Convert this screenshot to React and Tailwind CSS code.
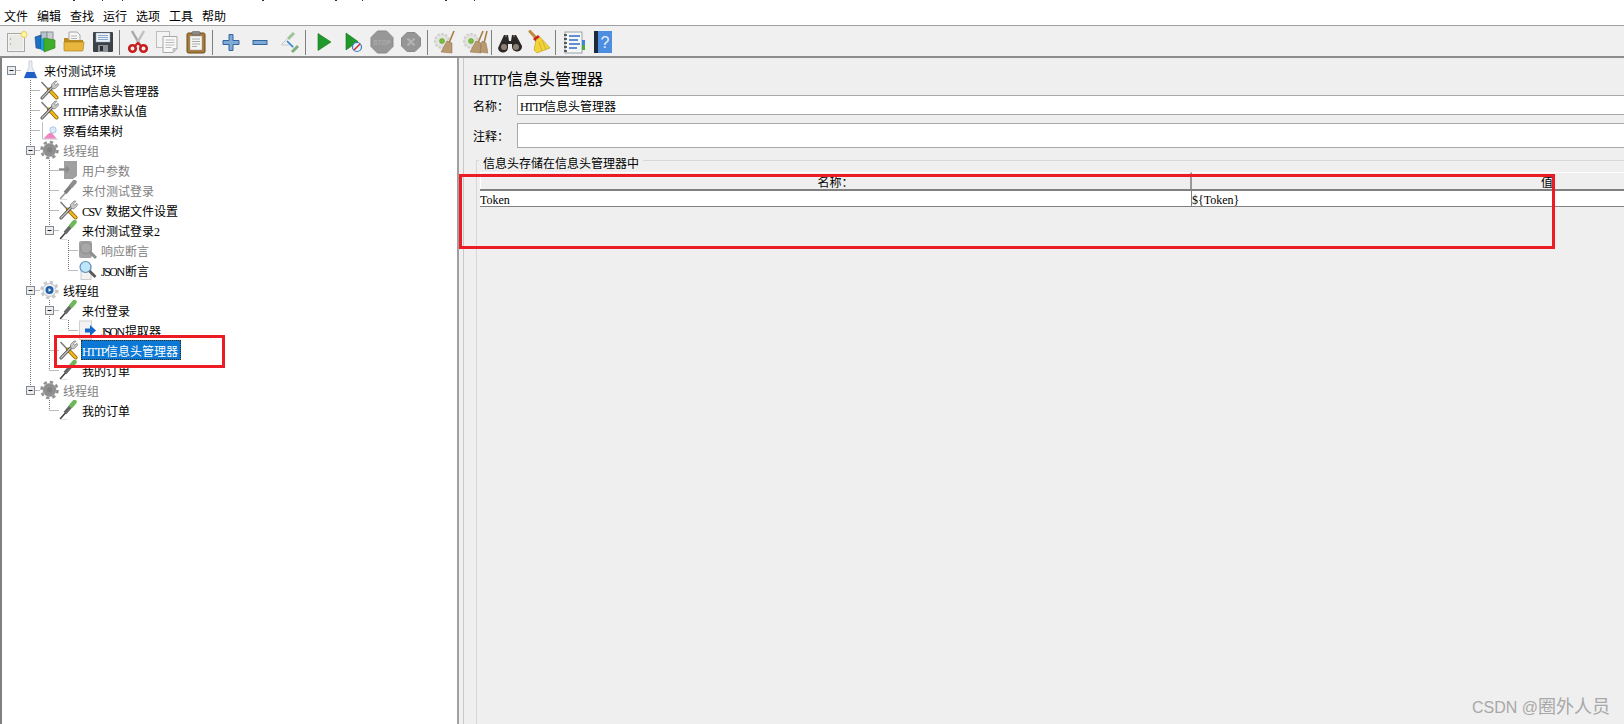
const cjk = "[font-family:'Noto_Sans_CJK_SC',sans-serif]";

// latin runs sit in a fixed cell per letter, like the bitmap font of the reference
function Latin({ text, big }) {
  const caps = /^[A-Z ]+$/.test(text);
  const width = text.length * (big ? 8.5 : 6);
  return (
    <span
      style={{ width }}
      className={
        "inline-block leading-none whitespace-pre [font-family:'Liberation_Serif',serif] " +
        (big ? "text-[14px] tracking-[-0.6px]" : "text-[12px]") +
        (!big && caps ? " tracking-[-1.5px]" : "")
      }
    >
      {text}
    </span>
  );
}

function Txt({ text, big = false }) {
  const parts = text.split(/([A-Za-z0-9${} ]+)/);
  return (
    <>
      {parts.map((p, i) =>
        /^[A-Za-z0-9${} ]+$/.test(p) ? <Latin key={i} text={p} big={big} /> : <span key={i}>{p}</span>
      )}
    </>
  );
}

/* ---------- toolbar icons ---------- */
function IconNew() {
  return (
    <svg width="24" height="24" viewBox="0 0 24 24">
      <rect x="3.500" y="3.500" width="17" height="18" fill="#f4f4f2" stroke="#a8a8a8" />
      <rect x="5" y="5" width="14" height="15" fill="#e9e9e6" />
      <circle cx="6.500" cy="9" r="0.700" fill="#999" />
      <circle cx="6.500" cy="14" r="0.700" fill="#999" />
      <circle cx="20" cy="4.500" r="3" fill="#fff6a8" stroke="#e6cf50" />
    </svg>
  );
}
function IconTemplates() {
  return (
    <svg width="24" height="24" viewBox="0 0 24 24">
      <rect x="8" y="2" width="6" height="12" fill="#b9c4cc" stroke="#7f8b94" />
      <rect x="14" y="2" width="6" height="12" fill="#c9ced2" stroke="#8a9298" />
      <path d="M2 7l6-2v14l-5-1z" fill="#1f6fc0" stroke="#134a85" strokeWidth="0.600" />
      <path d="M8 9l3-1v13l-3-1z" fill="#19a0d8" />
      <path d="M11 8l11 2v8l-11 4z" fill="#3fae2a" stroke="#2a7f1a" strokeWidth="0.600" />
    </svg>
  );
}
function IconOpen() {
  return (
    <svg width="24" height="24" viewBox="0 0 24 24">
      <path d="M7 2h8l3 3v9H7z" fill="#f5f5f5" stroke="#a5a5a5" />
      <path d="M9 6h6M9 8.500h6M9 11h6" stroke="#b5b5b5" />
      <path d="M2 8h4l1 2h14v10a1 1 0 0 1-1 1H3a1 1 0 0 1-1-1z" fill="#b98a1e" />
      <path d="M2 12h20l-1 8a1 1 0 0 1-1 1H3a1 1 0 0 1-1-1z" fill="#e8b63c" stroke="#b08420" strokeWidth="0.700" />
    </svg>
  );
}
function IconSave() {
  return (
    <svg width="24" height="24" viewBox="0 0 24 24">
      <rect x="2" y="2" width="20" height="20" rx="1" fill="#3c4148" />
      <rect x="5" y="3" width="14" height="9" fill="#eef2f6" stroke="#8fa3b8" strokeWidth="0.500" />
      <path d="M7 5.500h10M7 7.500h10M7 9.500h10" stroke="#8aa8cc" />
      <rect x="7" y="15" width="10" height="7" fill="#8d9298" />
      <rect x="9" y="16" width="3" height="5" fill="#2c2f33" />
    </svg>
  );
}
function IconCut() {
  return (
    <svg width="24" height="24" viewBox="0 0 24 24">
      <path d="M6 1l8 14" stroke="#a8a8a8" strokeWidth="2.500" />
      <path d="M18 1l-8 14" stroke="#c0c0c0" strokeWidth="2.500" />
      <circle cx="6.500" cy="18.500" r="3.300" fill="none" stroke="#c81e1e" strokeWidth="2.600" />
      <circle cx="17.500" cy="18.500" r="3.300" fill="none" stroke="#c81e1e" strokeWidth="2.600" />
      <path d="M9 16l3-3 3 3" fill="none" stroke="#c81e1e" strokeWidth="2" />
    </svg>
  );
}
function IconCopy() {
  return (
    <svg width="24" height="24" viewBox="0 0 24 24">
      <rect x="1.500" y="1.500" width="13" height="16" fill="#f4f4f4" stroke="#bdbdbd" />
      <path d="M8 6.500h14v12l-4 4H8z" fill="#f8f8f8" stroke="#a8a8a8" />
      <path d="M10.500 10h9M10.500 12.500h9M10.500 15h9M10.500 17.500h6" stroke="#bbb" />
      <path d="M22 18.500h-4v4z" fill="#d0d0d0" stroke="#a8a8a8" strokeWidth="0.600" />
    </svg>
  );
}
function IconPaste() {
  return (
    <svg width="24" height="24" viewBox="0 0 24 24">
      <rect x="3" y="3" width="18" height="20" rx="1.500" fill="#a87a3a" stroke="#6e4c1f" />
      <rect x="6" y="6" width="12" height="14" fill="#f6f6f4" stroke="#9a9a9a" strokeWidth="0.500" />
      <path d="M8 9h8M8 11.500h8M8 14h8M8 16.500h5" stroke="#aaa" />
      <rect x="8" y="1.500" width="8" height="3.500" rx="1" fill="#8b8b86" stroke="#555" strokeWidth="0.500" />
    </svg>
  );
}
function IconPlus() {
  return (
    <svg width="24" height="24" viewBox="0 0 24 24">
      <path d="M10 4.500h4v6h6v4h-6v6h-4v-6H4v-4h6z" fill="#7fa9d6" stroke="#34659c" />
    </svg>
  );
}
function IconMinus() {
  return (
    <svg width="24" height="24" viewBox="0 0 24 24">
      <rect x="5" y="10.500" width="14" height="4" fill="#7fa9d6" stroke="#34659c" />
    </svg>
  );
}
function IconToggle() {
  return (
    <svg width="24" height="24" viewBox="0 0 24 24">
      <path d="M11 9l6-6" stroke="#9cc496" strokeWidth="3" />
      <path d="M4 15l6-6" stroke="#bfc5c0" strokeWidth="1" />
      <path d="M5 15h8" stroke="#c6ccd0" strokeWidth="1" />
      <path d="M10 11l5 5" stroke="#2c7fd0" strokeWidth="1.600" />
      <path d="M14 17l2.500 0.500-0.500-2.500z" fill="#2c7fd0" />
      <path d="M15 22l6-6" stroke="#7fae7a" strokeWidth="3" />
    </svg>
  );
}
function IconPlay() {
  return (
    <svg width="24" height="24" viewBox="0 0 24 24">
      <path d="M6 3.500l13 8.500-13 8.500z" fill="#1f9a2a" stroke="#14701d" strokeWidth="0.600" />
    </svg>
  );
}
function IconPlayNoTimer() {
  return (
    <svg width="24" height="24" viewBox="0 0 24 24">
      <path d="M5 3l12 8.500L5 20z" fill="#1f9a2a" stroke="#14701d" strokeWidth="0.600" />
      <circle cx="16" cy="17" r="4.500" fill="#e8f0fa" stroke="#3f76c0" strokeWidth="1.200" />
      <path d="M13 20l6-6" stroke="#d02828" strokeWidth="1.400" />
    </svg>
  );
}
function IconStop() {
  return (
    <svg width="24" height="24" viewBox="0 0 24 24">
      <path d="M7.500 1h9L23 7.500v9L16.500 23h-9L1 16.500v-9z" fill="#979797" stroke="#888" />
      <text x="12" y="14.500" textAnchor="middle" fontSize="6.500" fontWeight="700" fill="#ababab" fontFamily="Liberation Sans, sans-serif">STOP</text>
    </svg>
  );
}
function IconShutdown() {
  return (
    <svg width="24" height="24" viewBox="0 0 24 24">
      <path d="M8 2.500h8L21.500 8v8L16 21.500H8L2.500 16V8z" fill="#959595" stroke="#8a8a8a" />
      <path d="M8.500 8.500l7 7M15.500 8.500l-7 7" stroke="#b2b2b2" strokeWidth="2.400" />
    </svg>
  );
}
function IconClear({ all = false }) {
  return (
    <svg width="26" height="24" viewBox="0 0 26 24">
      <circle cx="9" cy="11" r="7" fill="#e2e2de" stroke="#cfcfca" strokeWidth="2" strokeDasharray="2.500 1.500" />
      <circle cx="9" cy="11" r="2.500" fill="#7cbb3c" stroke="#5a9a28" strokeWidth="0.500" />
      <path d="M21 1l-5 12" stroke="#a87c48" strokeWidth="1.600" />
      <path d="M14 11l5 2 0 10-11-1z" fill="#b99a70" stroke="#8a6a44" strokeWidth="0.500" />
      {all && <path d="M25 1l-3 12" stroke="#a87c48" strokeWidth="1.600" />}
      {all && <path d="M20 11l4 2 2 10-8-1z" fill="#b99a70" stroke="#8a6a44" strokeWidth="0.500" />}
    </svg>
  );
}
function IconBinoculars() {
  return (
    <svg width="26" height="24" viewBox="0 0 26 24">
      <path d="M7 5h4l1 6h2l1-6h4l6 11a5 5 0 1 1-10 1v-3h-4v3a5 5 0 1 1-10 1z" fill="#2c2825" />
      <circle cx="7" cy="17" r="3" fill="#8b8178" />
      <circle cx="19" cy="17" r="3" fill="#8b8178" />
      <path d="M8 6h2M16 6h2" stroke="#77706a" strokeWidth="1.500" />
    </svg>
  );
}
function IconBroom() {
  return (
    <svg width="24" height="24" viewBox="0 0 24 24">
      <path d="M3 1.500l6 6.500" stroke="#c08a3a" strokeWidth="3" strokeLinecap="round" />
      <path d="M6 9l5-4 2 2-4 5z" fill="#cc1f1f" />
      <path d="M9 10l4-3 10 11-13 5-3-3z" fill="#f2d43a" stroke="#b89a20" strokeWidth="0.600" />
      <path d="M12 12l3 9M15 10l4 10" stroke="#c8a828" strokeWidth="0.800" />
    </svg>
  );
}
function IconFunc() {
  return (
    <svg width="24" height="24" viewBox="0 0 24 24">
      <rect x="3" y="2" width="17" height="21" fill="#f4f6f8" stroke="#9aa2aa" />
      <path d="M2 5h3M2 9h3M2 13h3M2 17h3M2 21h3" stroke="#333" strokeWidth="1.400" />
      <path d="M7 6h11M7 10h9M7 14h11M7 18h8" stroke="#2f6ec0" strokeWidth="1.400" />
      <rect x="20" y="10" width="3" height="5" fill="#3f86d8" />
      <rect x="20" y="15" width="3" height="5" fill="#4aaa3a" />
    </svg>
  );
}
function IconHelp() {
  return (
    <svg width="24" height="24" viewBox="0 0 24 24">
      <rect x="3" y="1" width="4" height="22" fill="#1c2a3c" />
      <rect x="7" y="1" width="14" height="22" fill="#4d8ee0" />
      <text x="14" y="18" textAnchor="middle" fontSize="16" fill="#e6f0fb" fontFamily="Liberation Sans, sans-serif">?</text>
    </svg>
  );
}

/* ---------- tree icons ---------- */
function Tools() {
  return (
    <svg width="19" height="20" viewBox="0 0 19 20">
      <path d="M1.500 2l7.500 8" stroke="#777" strokeWidth="1.400" />
      <path d="M9 9.500l7.500 8" stroke="#8a6400" strokeWidth="4" strokeLinecap="round" />
      <path d="M9 9.500l7.500 8" stroke="#f2b91c" strokeWidth="2.500" strokeLinecap="round" />
      <path d="M2 18L13.500 6" stroke="#444" strokeWidth="3" strokeLinecap="round" />
      <path d="M2 18L13.500 6" stroke="#c4c4c4" strokeWidth="1.400" strokeLinecap="round" />
      <path d="M12 8.500l-.5-4L15 1l2 .3-2.500 2.500 1 1.500 2.500-2 .5 2-3.500 3.500z" fill="#c8c8c8" stroke="#666" strokeWidth="0.600" />
    </svg>
  );
}
function Flask() {
  return (
    <svg width="19" height="20" viewBox="0 0 19 20">
      <path d="M8 1h3v6l5 11H3L8 7z" fill="#e8eef4" stroke="#b4bec8" strokeWidth="0.600" />
      <path d="M5.500 12h8l2.500 6H3z" fill="#1f5fc8" />
    </svg>
  );
}
function Graph() {
  return (
    <svg width="19" height="20" viewBox="0 0 19 20">
      <path d="M2.500 2v17h15" fill="none" stroke="#c0c0c0" />
      <path d="M3.500 18.500l5-5 3-1 5 6z" fill="#ee86c0" />
      <circle cx="13" cy="10" r="3.200" fill="#dcebfa" stroke="#8fb4dc" strokeWidth="0.700" />
    </svg>
  );
}
function Gear({ active = false }) {
  const c = active ? "#c4c8cc" : "#8f8f8f";
  return (
    <svg width="19" height="20" viewBox="0 0 19 20">
      <circle cx="9.500" cy="10" r="8" fill="none" stroke={c} strokeWidth="2.500" strokeDasharray="3.300 3" />
      <circle cx="9.500" cy="10" r="6.500" fill={active ? "#eef0f2" : "#8f8f8f"} stroke={active ? "#9aa0a6" : "#8f8f8f"} strokeWidth="0.600" />
      {active ? (
        <>
          <circle cx="9.500" cy="10" r="4" fill="#1f5fa8" />
          <path d="M8.500 8l3 2-3 2z" fill="#dfe8f2" />
        </>
      ) : (
        <circle cx="9.500" cy="10" r="2.500" fill="#808080" />
      )}
    </svg>
  );
}
function Pipette({ off = false }) {
  return (
    <svg width="19" height="20" viewBox="0 0 19 20">
      <path d="M1.500 18.500l7-8" stroke={off ? "#9a9a9a" : "#444"} strokeWidth="1.600" strokeLinecap="round" />
      <path d="M6 13l6-7" stroke={off ? "#7e7e7e" : "#666"} strokeWidth="3.600" />
      <path d="M12.500 5.500l3-3.500" stroke={off ? "#8e8e8e" : "#6cb858"} strokeWidth="4.400" strokeLinecap="round" />
      <path d="M1 19.500h7" stroke="#ddd" />
    </svg>
  );
}
function Params() {
  return (
    <svg width="19" height="20" viewBox="0 0 19 20">
      <path d="M5 1h13v15l-4 3H5z" fill="#a0a0a0" />
      <path d="M0 9.500h9" stroke="#8a8a8a" strokeWidth="2.400" />
      <path d="M7 5.500l4 4-4 4z" fill="#8a8a8a" />
    </svg>
  );
}
function AssertOff() {
  return (
    <svg width="19" height="20" viewBox="0 0 19 20">
      <rect x="1" y="1" width="13" height="17" rx="2" fill="#a2a2a2" />
      <circle cx="8" cy="8" r="5.500" fill="#a8a8a8" stroke="#8e8e8e" />
      <path d="M12 12l6 6" stroke="#8e8e8e" strokeWidth="3" />
    </svg>
  );
}
function AssertOn() {
  return (
    <svg width="19" height="20" viewBox="0 0 19 20">
      <rect x="3" y="6" width="10" height="13.500" fill="#f2f2f2" stroke="#ccc" />
      <circle cx="7.500" cy="7" r="5.500" fill="#bfe6fb" stroke="#5d8fb8" strokeWidth="1.200" />
      <path d="M11.500 11l6 6" stroke="#555" strokeWidth="2.600" />
    </svg>
  );
}
function Extract() {
  return (
    <svg width="19" height="20" viewBox="0 0 19 20">
      <rect x="1.500" y="1" width="12" height="18.500" fill="#f3f3f3" stroke="#cfcfcf" />
      <path d="M7 8.500h5V5l6 5.500L12 16v-3.500H7z" fill="#1668c8" />
    </svg>
  );
}

/* ---------- tree ---------- */
// one gutter cell of the tree: dotted guides and the expander box
function Guide({ type }) {
  const dot = { stroke: "#777", strokeDasharray: "1 1" };
  const isBox = type === "b" || type === "bl" || type === "box";
  return (
    <svg width="19" height="20" className="shrink-0">
      {(type === "v" || type === "e" || type === "b") && <path d="M9.500 0v20" {...dot} />}
      {(type === "l" || type === "bl") && <path d="M9.500 0v10" {...dot} />}
      {(type === "e" || type === "l" || isBox) && <path d="M9.500 10.500H19" {...dot} />}
      {isBox && (
        <>
          <rect x="5.500" y="6.500" width="8" height="8" fill="#ececec" stroke="#7f8a94" />
          <path d="M7.500 10.500h4" stroke="#222" />
        </>
      )}
    </svg>
  );
}

const rows = [
  { g: ["box"], icon: <Flask />, text: "来付测试环境" },
  { g: ["", "e"], icon: <Tools />, text: "HTTP信息头管理器" },
  { g: ["", "e"], icon: <Tools />, text: "HTTP请求默认值" },
  { g: ["", "e"], icon: <Graph />, text: "察看结果树" },
  { g: ["", "b"], icon: <Gear />, text: "线程组", off: true },
  { g: ["", "v", "e"], icon: <Params />, text: "用户参数", off: true },
  { g: ["", "v", "e"], icon: <Pipette off />, text: "来付测试登录", off: true },
  { g: ["", "v", "e"], icon: <Tools />, text: "CSV 数据文件设置" },
  { g: ["", "v", "bl"], icon: <Pipette />, text: "来付测试登录2" },
  { g: ["", "v", "", "e"], icon: <AssertOff />, text: "响应断言", off: true },
  { g: ["", "v", "", "l"], icon: <AssertOn />, text: "JSON断言" },
  { g: ["", "b"], icon: <Gear active />, text: "线程组" },
  { g: ["", "v", "b"], icon: <Pipette />, text: "来付登录" },
  { g: ["", "v", "v", "l"], icon: <Extract />, text: "JSON提取器" },
  { g: ["", "v", "e"], icon: <Tools />, text: "HTTP信息头管理器", selected: true },
  { g: ["", "v", "l"], icon: <Pipette />, text: "我的订单" },
  { g: ["", "bl"], icon: <Gear />, text: "线程组", off: true },
  { g: ["", "", "l"], icon: <Pipette />, text: "我的订单" },
];

function TreeRow({ row }) {
  return (
    <div className="flex h-5 items-center">
      {row.g.map((t, i) => (
        <Guide key={i} type={t} />
      ))}
      <span className="w-[19px] h-5 shrink-0">{row.icon}</span>
      {row.selected ? (
        <span className="ml-[3px] h-5 pr-[2px] flex items-center bg-[#0a78d4] text-white border border-dotted border-[#3a2a10] text-[12px]">
          <span className="pt-px">
            <Txt text={row.text} />
          </span>
        </span>
      ) : (
        <span className={"ml-1 pt-px text-[12px] whitespace-pre " + (row.off ? "text-[#808080]" : "text-black")}>
          <Txt text={row.text} />
        </span>
      )}
    </div>
  );
}

function ToolBtn({ children }) {
  return <div className="w-[29px] h-6 flex items-center justify-center shrink-0">{children}</div>;
}
function Sep() {
  return (
    <div className="w-[6px] h-[25px] shrink-0 pl-[2px]">
      <div className="w-px h-full bg-[#808080]" />
    </div>
  );
}

const menus = ["文件", "编辑", "查找", "运行", "选项", "工具", "帮助"];

export default function App() {
  return (
    <div className={"relative w-[1624px] h-[724px] overflow-hidden flex flex-col bg-[#f0f0f0] text-black " + cjk}>
      {/* top strip: specks left over from the cropped title bar, then the menu */}
      <div className="h-[25px] bg-white shrink-0 overflow-hidden">
        <svg width="520" height="7" className="block">
          <path
            d="M73 0h2M102 0h1M122 0h1M262 0h2M335 0h2M362 0h1M445 0h2M474 0h1"
            stroke="#333"
            strokeWidth="2"
          />
        </svg>
        <div className="flex pl-1 gap-[9px] text-[12px] leading-[16px] mt-px">
          {menus.map((m) => (
            <span key={m}>{m}</span>
          ))}
        </div>
      </div>

      {/* toolbar */}
      <div className="h-[33px] shrink-0 pl-px pt-[2px] flex items-center border-t border-b-2 border-t-[#a0a0a0] border-b-[#8c8c8c] bg-[#f0f0f0]">
        <ToolBtn><IconNew /></ToolBtn>
        <ToolBtn><IconTemplates /></ToolBtn>
        <ToolBtn><IconOpen /></ToolBtn>
        <ToolBtn><IconSave /></ToolBtn>
        <Sep />
        <ToolBtn><IconCut /></ToolBtn>
        <ToolBtn><IconCopy /></ToolBtn>
        <ToolBtn><IconPaste /></ToolBtn>
        <Sep />
        <ToolBtn><IconPlus /></ToolBtn>
        <ToolBtn><IconMinus /></ToolBtn>
        <ToolBtn><IconToggle /></ToolBtn>
        <Sep />
        <ToolBtn><IconPlay /></ToolBtn>
        <ToolBtn><IconPlayNoTimer /></ToolBtn>
        <ToolBtn><IconStop /></ToolBtn>
        <ToolBtn><IconShutdown /></ToolBtn>
        <Sep />
        <ToolBtn><IconClear /></ToolBtn>
        <ToolBtn><IconClear all /></ToolBtn>
        <Sep />
        <ToolBtn><IconBinoculars /></ToolBtn>
        <ToolBtn><IconBroom /></ToolBtn>
        <Sep />
        <ToolBtn><IconFunc /></ToolBtn>
        <ToolBtn><IconHelp /></ToolBtn>
      </div>

      <div className="flex-1 flex min-h-0">
        {/* tree panel */}
        <div className="w-[459px] shrink-0 bg-white border-l-2 border-r-2 border-l-[#808080] border-r-[#a0a0a0] pt-[2px]">
          {rows.map((r, i) => (
            <TreeRow key={i} row={r} />
          ))}
        </div>

        {/* divider, then the editor panel */}
        <div className="w-[4px] shrink-0" />
        <div className="flex-1 min-w-0 overflow-hidden bg-[#efefef] border-l border-l-[#c8c8c8] pl-[9px] pt-[10px]">
          <div className="h-5 text-[16px] leading-[20px] whitespace-pre">
            <Txt text="HTTP信息头管理器" big />
          </div>

          <div className="flex items-center h-5 mt-[7px] text-[12px]">
            <span className="w-[44px] shrink-0 pt-px">名称：</span>
            <div className="w-[1130px] shrink-0 h-5 bg-white border border-[#a8a8a8] pl-[2px] flex items-center">
              <span className="pt-px">
                <Txt text="HTTP信息头管理器" />
              </span>
            </div>
          </div>
          <div className="flex items-center h-[25px] mt-2 text-[12px]">
            <span className="w-[44px] shrink-0">注释：</span>
            <div className="w-[1130px] shrink-0 h-[25px] bg-white border border-[#a8a8a8]" />
          </div>

          {/* titled group with the header table */}
          <div className="mt-3 ml-[3px] h-[600px] w-[1500px] border border-[#d8d8d8] pl-[3px] text-[12px]">
            <div className="-mt-[6px] -ml-px w-fit px-1 bg-[#efefef] leading-[16px]">信息头存储在信息头管理器中</div>
            <div className="mt-px w-[1422px]">
              <div className="flex h-[19px] border-b-2 border-b-[#808080]">
                <div className="w-[712px] shrink-0 text-center border-t border-l border-t-white border-l-white leading-[17px] border-r-2 border-r-[#9a9a9a]">
                  名称：
                </div>
                <div className="flex-1 text-center border-t border-t-white leading-[17px]">值</div>
              </div>
              <div className="flex h-4 bg-white border-b border-b-[#808080]">
                <div className="w-[712px] shrink-0 border-r border-r-[#808080] flex items-center pt-[2px]">
                  <Txt text="Token" />
                </div>
                <div className="flex-1 flex items-center pt-[2px]">
                  <Txt text="${Token}" />
                </div>
              </div>
            </div>
          </div>
        </div>
      </div>

      {/* hand drawn annotations and watermark lying over the window */}
      <div className="absolute left-[459px] top-[174px] w-[1096px] h-[75px] border-[3px] border-[#ed1c24]" />
      <div className="absolute left-[54px] top-[335px] w-[171px] h-[33px] border-[3px] border-[#ed1c24]" />
      <div className="absolute left-[1472px] top-[697px] text-[16px] leading-[20px] whitespace-pre text-[#a8a8a8] [font-family:'Liberation_Sans','Noto_Sans_CJK_SC',sans-serif]">
        CSDN @<span className="text-[18px]">圈外人员</span>
      </div>
    </div>
  );
}
